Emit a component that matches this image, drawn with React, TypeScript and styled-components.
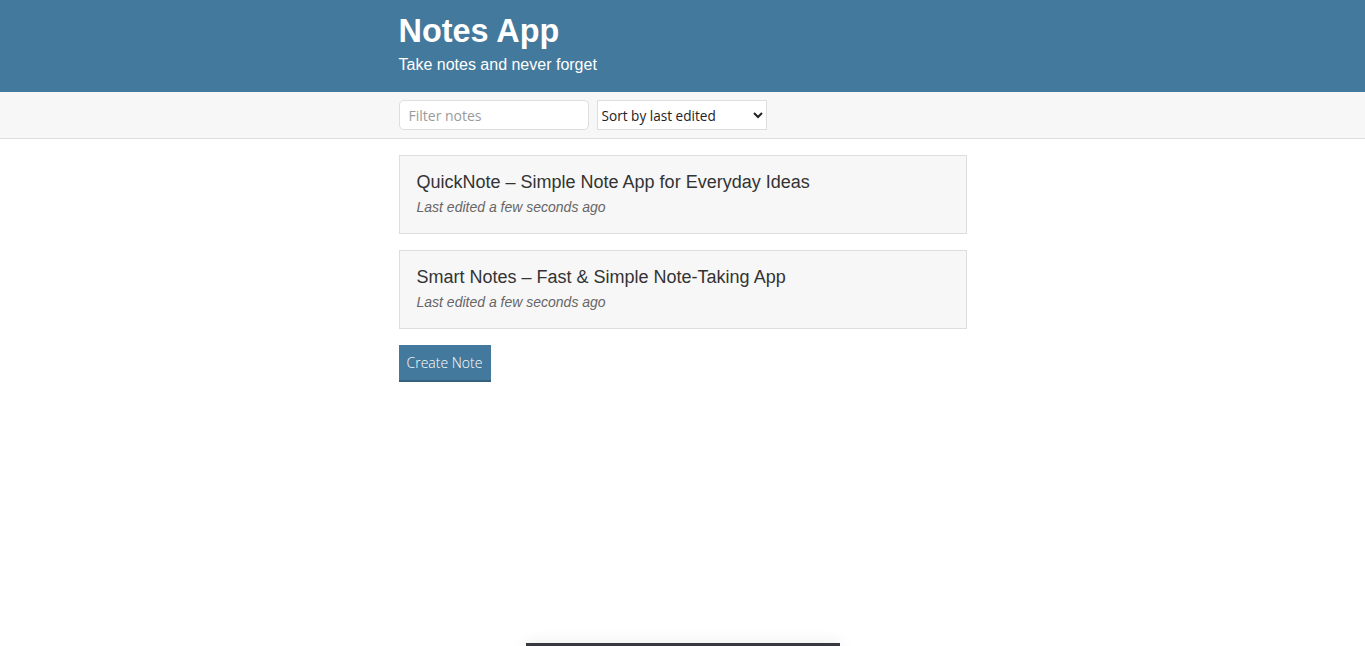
import React from "react";
import styled, { createGlobalStyle } from "styled-components";

// Data --------------------------------------------------------------------------

const notes = [
  { id: 1, title: "QuickNote – Simple Note App for Everyday Ideas" },
  { id: 2, title: "Smart Notes – Fast & Simple Note-Taking App" },
];

// Component ---------------------------------------------------------------------

const App: React.FC = () => {
  return (
    <>
      <GlobalStyle />
      <Header>
        <Container>
          <Title>Notes App</Title>
          <Subtitle>Take notes and never forget</Subtitle>
        </Container>
      </Header>
      <Actions>
        <ActionsContainer>
          <FilterInput type="text" placeholder="Filter notes" />
          <SortSelect defaultValue="byEdited">
            <option value="byEdited">Sort by last edited</option>
            <option value="byCreated">Sort by recently created</option>
            <option value="alphabetical">Sort alphabetically</option>
          </SortSelect>
        </ActionsContainer>
      </Actions>
      <Main>
        <NoteList>
          {notes.map((note) => (
            <NoteItem key={note.id} href="#">
              <NoteTitle>{note.title}</NoteTitle>
              <NoteStatus>Last edited a few seconds ago</NoteStatus>
            </NoteItem>
          ))}
        </NoteList>
        <Button>Create Note</Button>
      </Main>
      <Toast />
    </>
  );
};

export default App;

// Styled ------------------------------------------------------------------------

const GlobalStyle = createGlobalStyle`
  * {
    box-sizing: border-box;
  }
  body {
    margin: 0;
    background: #ffffff;
    color: #333333;
    font-family: "Liberation Sans", Arial, sans-serif;
  }
`;

const Container = styled.div`
  width: 568px;
  margin: 0 auto;
`;

const Header = styled.header`
  background: #43799c;
  color: #ffffff;
  height: 92px;
  padding-top: 12px;
`;

const Title = styled.h1`
  margin: 0;
  font-size: 32.4px;
  font-weight: 700;
  line-height: 38px;
`;

const Subtitle = styled.h2`
  margin: 5px 0 0;
  font-size: 16px;
  font-weight: 300;
  line-height: 20px;
`;

const Actions = styled.div`
  background: #f7f7f7;
  border-bottom: 1px solid #dedede;
  height: 47px;
  padding-top: 8px;
`;

const ActionsContainer = styled(Container)`
  display: flex;
  align-items: center;
  gap: 8px;
`;

const FilterInput = styled.input`
  width: 190px;
  height: 30px;
  border: 1px solid #dedede;
  border-radius: 5px;
  background: #ffffff;
  padding: 0 9px;
  font-family: "Open Sans", sans-serif;
  font-size: 14px;
  color: #333333;
  outline: none;

  &::placeholder {
    color: #9a9a9a;
  }
`;

const SortSelect = styled.select`
  width: 170px;
  height: 30px;
  border: 1px solid #dedede;
  border-radius: 0;
  background: #ffffff;
  padding: 1px 0 0;
  font-family: "Open Sans", sans-serif;
  font-size: 13.6px;
  color: #222222;
`;

const Main = styled(Container)`
  padding-top: 16px;
`;

const NoteList = styled.div`
  display: flex;
  flex-direction: column;
  gap: 16px;
  margin-bottom: 16px;
`;

const NoteItem = styled.a`
  display: block;
  height: 79px;
  padding: 15px 16px 16px 17px;
  background: #f7f7f7;
  border: 1px solid #dedede;
  text-decoration: none;
  color: #333333;
`;

const NoteTitle = styled.p`
  margin: 0;
  font-size: 18px;
  line-height: 22px;
  color: #333333;
`;

const NoteStatus = styled.p`
  margin: 5px 0 0;
  font-size: 14px;
  font-style: italic;
  line-height: 18px;
  color: #666666;
`;

const Button = styled.button`
  height: 37px;
  padding: 0 9px 0 8px;
  background: #43799c;
  border: none;
  border-bottom: 2px solid #35617e;
  color: #ffffff;
  font-family: "Open Sans", sans-serif;
  font-weight: 300;
  font-size: 14px;
  cursor: pointer;
`;

const Toast = styled.div`
  position: fixed;
  left: 526px;
  top: 643px;
  width: 314px;
  height: 40px;
  background: #383841;
  box-shadow: 0 0 16px rgba(0, 0, 0, 0.08);
`;
